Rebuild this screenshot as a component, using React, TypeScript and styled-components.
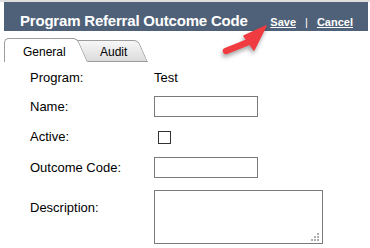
import React from 'react';
import styled, { createGlobalStyle } from 'styled-components';

const GlobalStyle = createGlobalStyle`
    html, body {
        margin: 0;
        padding: 0;
        background: #fff;
    }
    body {
        font-family: "Liberation Sans", Arial, sans-serif;
        width: 370px;
        height: 248px;
        overflow: hidden;
    }
`;

const App: React.FC = () => {
    return (
        <Page>
            <GlobalStyle/>
            <Header>
                <Title>Program Referral Outcome Code</Title>
                <Actions>
                    <ActionLink href="#">Save</ActionLink>
                    <Divider>|</Divider>
                    <ActionLink href="#">Cancel</ActionLink>
                </Actions>
            </Header>

            {/* Вкладки */}
            <TabStrip>
                <Tab $active>General</Tab>
                <Tab>Audit</Tab>
            </TabStrip>

            <Form>
                <Label>Program:</Label>
                <Value>Test</Value>

                <Label>Name:</Label>
                <Input type="text"/>

                <Label>Active:</Label>
                <CheckCell><Check type="checkbox"/></CheckCell>

                <Label>Outcome Code:</Label>
                <Input type="text"/>

                <Label $top>Description:</Label>
                <TextWrap>
                    <TextArea/>
                    <Grip width="8" height="8" viewBox="0 0 8 8">
                        <rect x="6" y="0" width="2" height="2"/>
                        <rect x="3" y="3" width="2" height="2"/>
                        <rect x="6" y="3" width="2" height="2"/>
                        <rect x="0" y="6" width="2" height="2"/>
                        <rect x="3" y="6" width="2" height="2"/>
                        <rect x="6" y="6" width="2" height="2"/>
                    </Grip>
                </TextWrap>
            </Form>

            {/* Стрелка-указатель */}
            <Pointer width="60" height="36" viewBox="0 0 60 36">
                <line x1="11" y1="29" x2="36" y2="19" stroke="#f03c41" strokeWidth="6.5" strokeLinecap="round"/>
                <polygon points="51,4 29,14 39,28" fill="#f03c41" stroke="#f03c41" strokeWidth="1.5" strokeLinejoin="round"/>
            </Pointer>
        </Page>
    );
};

const Page = styled.div`
    position: relative;
    width: 370px;
    height: 248px;
    box-sizing: border-box;
    border-top: 2px solid #dedede;
    overflow: hidden;
`;

const Header = styled.div`
    display: flex;
    align-items: baseline;
    height: 29px;
    box-sizing: border-box;
    margin: 0 2px 0 4px;
    padding: 10px 15px 0 16px;
    background: #4f6178;
    color: #fff;
`;

const Title = styled.h1`
    margin: 0;
    font-size: 15px;
    font-weight: bold;
    line-height: 18px;
    letter-spacing: -0.2px;
`;

const Actions = styled.div`
    margin-left: auto;
    display: flex;
    align-items: baseline;
    font-size: 11px;
    font-weight: bold;
`;

const ActionLink = styled.a`
    color: #fff;
    text-decoration: underline;
`;

const Divider = styled.span`
    margin: 0 9px;
    font-weight: normal;
`;

const TabStrip = styled.div`
    display: flex;
    align-items: flex-end;
    height: 24px;
    margin: 7px 0 0 4px;
`;

const Tab = styled.div<{ $active?: boolean }>`
    position: relative;
    z-index: ${(p) => (p.$active ? 2 : 1)};
    display: flex;
    align-items: flex-end;
    box-sizing: border-box;
    height: ${(p) => (p.$active ? 24 : 22)}px;
    width: ${(p) => (p.$active ? 84 : 74)}px;
    margin-left: ${(p) => (p.$active ? 0 : -14)}px;
    padding: 0 0 3px ${(p) => (p.$active ? 19 : 26)}px;
    font-size: 12px;
    line-height: 14px;
    color: #000;

    &::before {
        content: '';
        position: absolute;
        z-index: -1;
        top: 0;
        bottom: 0;
        left: 0;
        right: 14px;
        border-top: 1px solid #9c9c9c;
        border-left: ${(p) => (p.$active ? '1px solid #9c9c9c' : 'none')};
        border-bottom: ${(p) => (p.$active ? 'none' : '1px solid #9c9c9c')};
        border-top-left-radius: ${(p) => (p.$active ? 5 : 0)}px;
        background: ${(p) => (p.$active ? '#fff' : 'linear-gradient(#f7f7f7, #dcdcdc)')};
    }

    &::after {
        content: '';
        position: absolute;
        z-index: -1;
        top: 0;
        bottom: 0;
        right: 0;
        width: 28px;
        box-sizing: border-box;
        border-top: 1px solid #9c9c9c;
        border-right: 1px solid #9c9c9c;
        border-bottom: ${(p) => (p.$active ? 'none' : '1px solid #9c9c9c')};
        border-top-right-radius: 5px;
        transform: skewX(24deg);
        transform-origin: bottom left;
        background: ${(p) => (p.$active ? '#fff' : 'linear-gradient(#f7f7f7, #dcdcdc)')};
    }
`;

const Form = styled.div`
    display: grid;
    grid-template-columns: 124px auto;
    row-gap: 10px;
    align-items: center;
    justify-items: start;
    padding: 8px 0 0 30px;
    font-size: 13px;
    line-height: 16px;
    color: #000;
`;

const Label = styled.div<{ $top?: boolean }>`
    align-self: ${(p) => (p.$top ? 'start' : 'center')};
    margin-top: ${(p) => (p.$top ? 12 : 0)}px;
`;

const Value = styled.div``;

const Input = styled.input`
    width: 104px;
    height: 21px;
    box-sizing: border-box;
    margin: 0;
    padding: 2px 4px;
    border: 1px solid #7a7a7a;
    border-radius: 0;
    font: inherit;
    outline: none;
`;

const CheckCell = styled.div`
    display: flex;
    align-items: center;
    height: 20px;
    padding-left: 4px;
`;

const Check = styled.input`
    appearance: none;
    width: 13px;
    height: 13px;
    box-sizing: border-box;
    margin: 0;
    border: 1px solid #333;
    background: #fff;
`;

const TextWrap = styled.div`
    position: relative;
    margin-top: 2px;
`;

const TextArea = styled.textarea`
    display: block;
    width: 169px;
    height: 54px;
    box-sizing: border-box;
    margin: 0;
    border: 1px solid #7a7a7a;
    border-radius: 0;
    resize: none;
    font: inherit;
    outline: none;
`;

const Grip = styled.svg`
    position: absolute;
    right: 4px;
    bottom: 3px;
    fill: #b0b0b0;
`;

const Pointer = styled.svg`
    position: absolute;
    left: 215px;
    top: 20px;
    filter: drop-shadow(-1px 3px 2px rgba(0, 0, 0, 0.35));
`;

export default App;
